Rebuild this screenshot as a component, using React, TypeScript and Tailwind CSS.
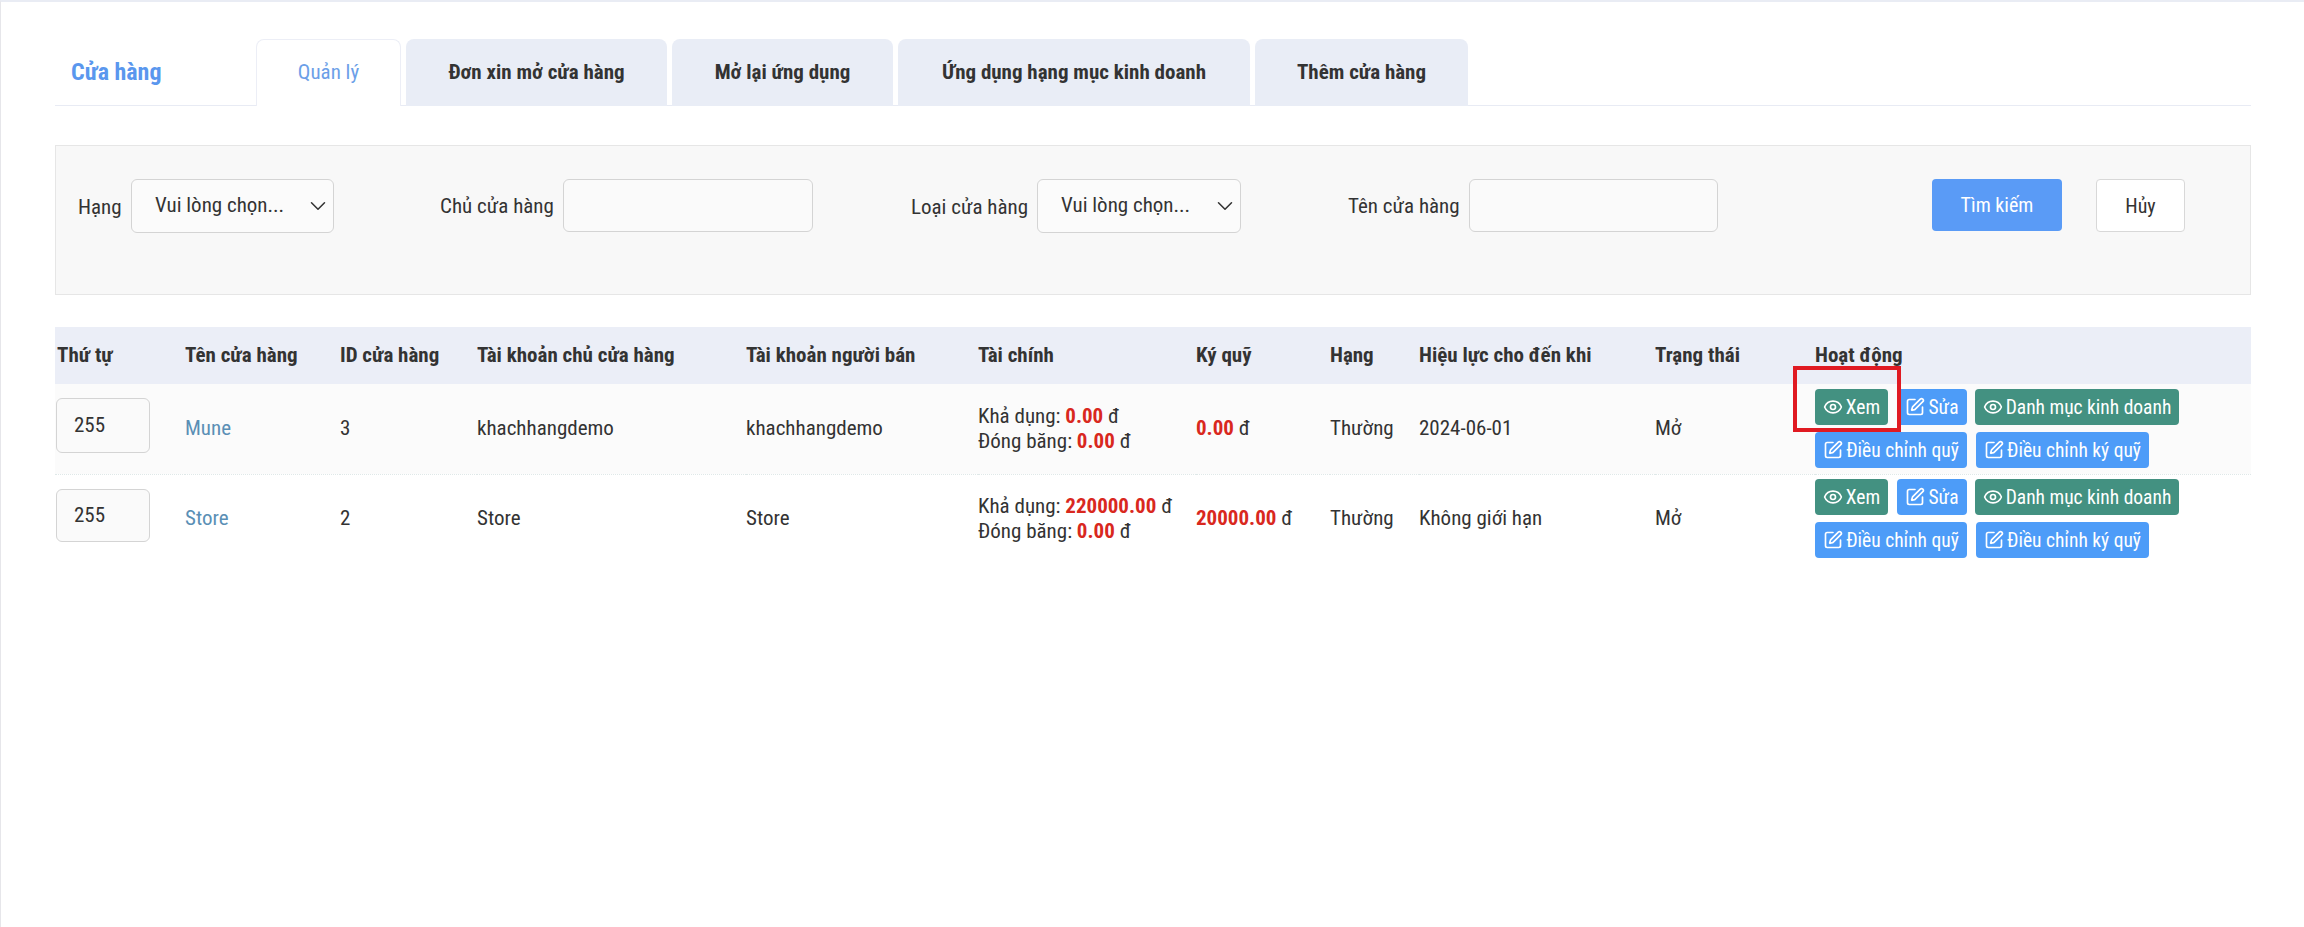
import { ChevronDown, Eye, SquarePen } from "lucide-react";

const rows = [
  { name: "Mune", id: "3", owner: "khachhangdemo", seller: "khachhangdemo", available: "0.00", frozen: "0.00", deposit: "0.00", until: "2024-06-01", inputHeight: "h-[55px]", rowClass: "h-[90px] bg-[#fbfbfb] border-b border-dotted border-[#dfe8e8]" },
  { name: "Store", id: "2", owner: "Store", seller: "Store", available: "220000.00", frozen: "0.00", deposit: "20000.00", until: "Không giới hạn", inputHeight: "h-[53px]", rowClass: "h-[89px] bg-white" },
];

const headers = ["Thứ tự", "Tên cửa hàng", "ID cửa hàng", "Tài khoản chủ cửa hàng", "Tài khoản người bán", "Tài chính", "Ký quỹ", "Hạng", "Hiệu lực cho đến khi", "Trạng thái", "Hoạt động"];

function Select({ width }: { width: string }) {
  return (
    <div className={`${width} h-[54px] flex items-center justify-between pl-[23px] pr-[2px] bg-[#fbfbfb] border border-[#d4d4d4] rounded-[6px]`}>
      <span>Vui lòng chọn...</span>
      <ChevronDown size={26} strokeWidth={1.4} className="text-[#333]" />
    </div>
  );
}

function Input({ width }: { width: string }) {
  return <div className={`${width} h-[53px] bg-[#fafafa] border border-[#d4d4d4] rounded-[6px]`} />;
}

function ActionButton({ kind, label, width }: { kind: "view" | "edit"; label: string; width: string }) {
  const color = kind === "view" ? "bg-[#439181]" : "bg-[#4d9cf8]";
  const Icon = kind === "view" ? Eye : SquarePen;
  return (
    <button className={`${width} ${color} h-[36px] flex items-center justify-center gap-[3px] text-[19.5px] text-white rounded-[4px] whitespace-nowrap`}>
      <Icon size={20} strokeWidth={2} />
      {label}
    </button>
  );
}

function Actions() {
  return (
    <div className="flex flex-col gap-[7px]">
      <div className="flex gap-[9px]">
        <ActionButton kind="view" label="Xem" width="w-[73px]" />
        <ActionButton kind="edit" label="Sửa" width="w-[70px] -mr-[1px]" />
        <ActionButton kind="view" label="Danh mục kinh doanh" width="w-[204px]" />
      </div>
      <div className="flex gap-[9px]">
        <ActionButton kind="edit" label="Điều chỉnh quỹ" width="w-[152px]" />
        <ActionButton kind="edit" label="Điều chỉnh ký quỹ" width="w-[173px]" />
      </div>
    </div>
  );
}

export default function App() {
  return (
    <div className="relative h-[927px] bg-white border-t-2 border-t-[#e9ecf4] border-l border-l-[#e6e6ea] pl-[54px] pr-[53px] pt-[37px] text-[21px] text-[#333] font-['Roboto',sans-serif] [font-stretch:condensed]">
      <div className="flex items-end h-[67px] border-b border-[#e8ebf4]">
        <div className="w-[201px] h-full flex items-center pl-[16px] text-[24px] font-bold text-[#5a97ee]">Cửa hàng</div>
        <div className="flex gap-[5px] h-[67px] -mb-[1px]">
          <div className="w-[145px] flex items-center justify-center bg-white border border-b-0 border-[#eceef6] rounded-t-[8px] text-[#6c9fe8]">Quản lý</div>
          {[
            ["Đơn xin mở cửa hàng", "w-[261px]"],
            ["Mở lại ứng dụng", "w-[221px]"],
            ["Ứng dụng hạng mục kinh doanh", "w-[352px]"],
            ["Thêm cửa hàng", "w-[213px]"],
          ].map(([label, width]) => (
            <div key={label} className={`${width} flex items-center justify-center bg-[#e9edf6] rounded-t-[8px] font-bold`}>{label}</div>
          ))}
        </div>
      </div>

      <div className="mt-[39px] h-[150px] pl-[22px] pt-[33px] flex items-start bg-[#f8f8f8] border border-[#e6e6e6]">
        <div className="flex items-center">
          <span className="w-[53px] pt-[3px] whitespace-nowrap">Hạng</span>
          <Select width="w-[203px]" />
        </div>
        <div className="flex items-center ml-[106px]">
          <span className="w-[123px] pt-[3px] whitespace-nowrap">Chủ cửa hàng</span>
          <Input width="w-[250px]" />
        </div>
        <div className="flex items-center ml-[98px]">
          <span className="w-[126px] pt-[3px] whitespace-nowrap">Loại cửa hàng</span>
          <Select width="w-[204px]" />
        </div>
        <div className="flex items-center ml-[107px]">
          <span className="w-[121px] pt-[3px] whitespace-nowrap">Tên cửa hàng</span>
          <Input width="w-[249px]" />
        </div>
        <button className="ml-[214px] w-[130px] h-[52px] bg-[#5a9bf6] text-[20px] text-white rounded-[4px]">Tìm kiếm</button>
        <button className="ml-[34px] w-[89px] h-[53px] bg-white border border-[#d8d8d8] text-[20px] rounded-[4px]">Hủy</button>
      </div>

      <table className="mt-[32px] w-[2196px] table-fixed border-collapse text-left">
        <colgroup>
          <col className="w-[130px]" />
          <col className="w-[155px]" />
          <col className="w-[137px]" />
          <col className="w-[269px]" />
          <col className="w-[232px]" />
          <col className="w-[218px]" />
          <col className="w-[134px]" />
          <col className="w-[89px]" />
          <col className="w-[236px]" />
          <col className="w-[160px]" />
          <col />
        </colgroup>
        <thead>
          <tr className="h-[57px] bg-[#ebeef7]">
            {headers.map((h, i) => (
              <th key={h} className={`font-bold ${i === 0 ? "pl-[2px]" : ""}`}>{h}</th>
            ))}
          </tr>
        </thead>
        <tbody>
          {rows.map((row) => (
            <tr key={row.name} className={row.rowClass}>
              <td className="pl-[1px]">
                <div className={`${row.inputHeight} w-[94px] mb-[7px] flex items-center pl-[17px] bg-[#fafafa] border border-[#d4d4d4] rounded-[6px]`}>255</div>
              </td>
              <td className="pb-[1px] text-[#5a8fb5]">{row.name}</td>
              <td className="pb-[1px]">{row.id}</td>
              <td className="pb-[1px]">{row.owner}</td>
              <td className="pb-[1px]">{row.seller}</td>
              <td className="leading-[25px]">
                <div>Khả dụng: <b className="text-[#d9281e]">{row.available}</b> đ</div>
                <div>Đóng băng: <b className="text-[#d9281e]">{row.frozen}</b> đ</div>
              </td>
              <td className="pb-[1px]"><b className="text-[#d9281e]">{row.deposit}</b> đ</td>
              <td className="pb-[1px]">Thường</td>
              <td className="pb-[1px]">{row.until}</td>
              <td className="pb-[1px]">Mở</td>
              <td><Actions /></td>
            </tr>
          ))}
        </tbody>
      </table>

      <div className="absolute left-[1792px] top-[364px] w-[108px] h-[66px] border-[4px] border-[#e01a22]" />
    </div>
  );
}
